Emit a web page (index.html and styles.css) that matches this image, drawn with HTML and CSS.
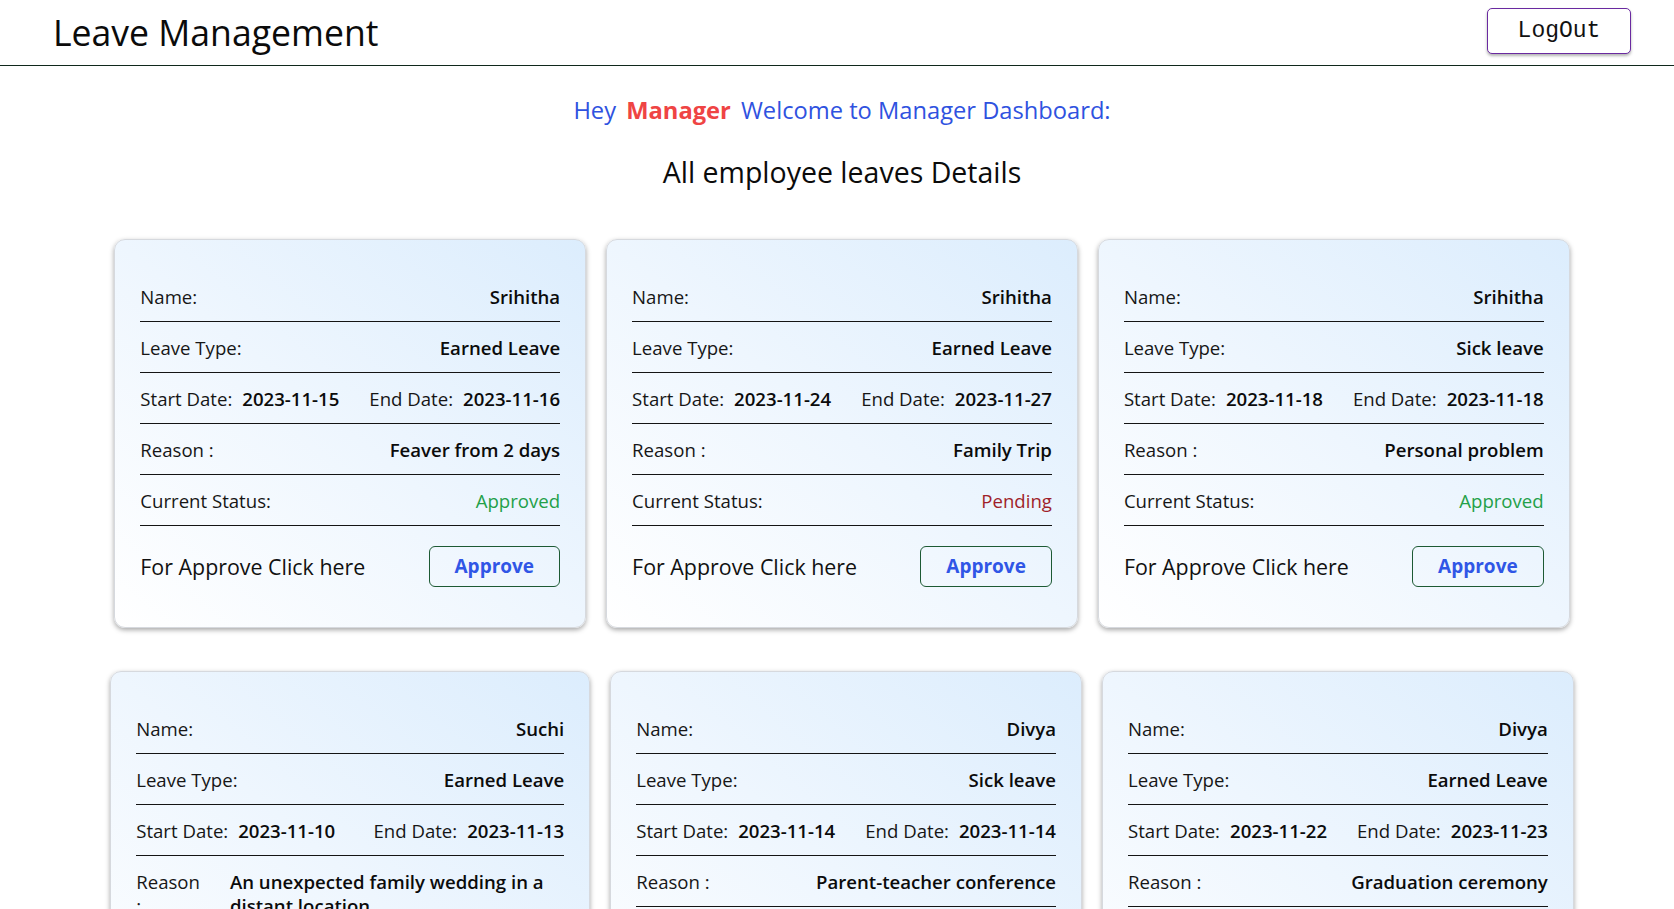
FILE: index.html
```html
<!DOCTYPE html>
<html lang="en">
<head>
<meta charset="utf-8">
<title>Leave Management</title>
<link rel="stylesheet" href="styles.css">
</head>
<body>
<header class="topbar">
  <h1 class="brand">Leave Management</h1>
  <button class="logout" type="button">LogOut</button>
</header>
<main class="dashboard">
  <h4 class="greeting">Hey <span class="who">Manager</span> Welcome to Manager Dashboard:</h4>
  <h3 class="section-title">All employee leaves Details</h3>
  <div class="cards">
    <div class="card">
      <div class="row"><span class="label">Name:</span><span class="value">Srihitha</span></div>
      <div class="row"><span class="label">Leave Type:</span><span class="value">Earned Leave</span></div>
      <div class="row dates">
        <span class="group"><span class="label">Start Date:</span><span class="value">2023-11-15</span></span>
        <span class="group"><span class="label">End Date:</span><span class="value">2023-11-16</span></span>
      </div>
      <div class="row reason"><span class="label">Reason :</span><span class="value">Feaver from 2 days</span></div>
      <div class="row"><span class="label">Current Status:</span><span class="status approved">Approved</span></div>
      <div class="approve-row"><span class="approve-text">For Approve Click here</span><button class="approve" type="button">Approve</button></div>
    </div>
    <div class="card">
      <div class="row"><span class="label">Name:</span><span class="value">Srihitha</span></div>
      <div class="row"><span class="label">Leave Type:</span><span class="value">Earned Leave</span></div>
      <div class="row dates">
        <span class="group"><span class="label">Start Date:</span><span class="value">2023-11-24</span></span>
        <span class="group"><span class="label">End Date:</span><span class="value">2023-11-27</span></span>
      </div>
      <div class="row reason"><span class="label">Reason :</span><span class="value">Family Trip</span></div>
      <div class="row"><span class="label">Current Status:</span><span class="status pending">Pending</span></div>
      <div class="approve-row"><span class="approve-text">For Approve Click here</span><button class="approve" type="button">Approve</button></div>
    </div>
    <div class="card">
      <div class="row"><span class="label">Name:</span><span class="value">Srihitha</span></div>
      <div class="row"><span class="label">Leave Type:</span><span class="value">Sick leave</span></div>
      <div class="row dates">
        <span class="group"><span class="label">Start Date:</span><span class="value">2023-11-18</span></span>
        <span class="group"><span class="label">End Date:</span><span class="value">2023-11-18</span></span>
      </div>
      <div class="row reason"><span class="label">Reason :</span><span class="value">Personal problem</span></div>
      <div class="row"><span class="label">Current Status:</span><span class="status approved">Approved</span></div>
      <div class="approve-row"><span class="approve-text">For Approve Click here</span><button class="approve" type="button">Approve</button></div>
    </div>
    <div class="card">
      <div class="row"><span class="label">Name:</span><span class="value">Suchi</span></div>
      <div class="row"><span class="label">Leave Type:</span><span class="value">Earned Leave</span></div>
      <div class="row dates">
        <span class="group"><span class="label">Start Date:</span><span class="value">2023-11-10</span></span>
        <span class="group"><span class="label">End Date:</span><span class="value">2023-11-13</span></span>
      </div>
      <div class="row reason"><span class="label">Reason :</span><span class="value">An unexpected family wedding in a distant location</span></div>
      <div class="row"><span class="label">Current Status:</span><span class="status pending">Pending</span></div>
      <div class="approve-row"><span class="approve-text">For Approve Click here</span><button class="approve" type="button">Approve</button></div>
    </div>
    <div class="card">
      <div class="row"><span class="label">Name:</span><span class="value">Divya</span></div>
      <div class="row"><span class="label">Leave Type:</span><span class="value">Sick leave</span></div>
      <div class="row dates">
        <span class="group"><span class="label">Start Date:</span><span class="value">2023-11-14</span></span>
        <span class="group"><span class="label">End Date:</span><span class="value">2023-11-14</span></span>
      </div>
      <div class="row reason"><span class="label">Reason :</span><span class="value">Parent-teacher conference</span></div>
      <div class="row"><span class="label">Current Status:</span><span class="status pending">Pending</span></div>
      <div class="approve-row"><span class="approve-text">For Approve Click here</span><button class="approve" type="button">Approve</button></div>
    </div>
    <div class="card">
      <div class="row"><span class="label">Name:</span><span class="value">Divya</span></div>
      <div class="row"><span class="label">Leave Type:</span><span class="value">Earned Leave</span></div>
      <div class="row dates">
        <span class="group"><span class="label">Start Date:</span><span class="value">2023-11-22</span></span>
        <span class="group"><span class="label">End Date:</span><span class="value">2023-11-23</span></span>
      </div>
      <div class="row reason"><span class="label">Reason :</span><span class="value">Graduation ceremony</span></div>
      <div class="row"><span class="label">Current Status:</span><span class="status pending">Pending</span></div>
      <div class="approve-row"><span class="approve-text">For Approve Click here</span><button class="approve" type="button">Approve</button></div>
    </div>
  </div>
</main>
</body>
</html>
```

FILE: styles.css
```css
* { box-sizing: border-box; }

body {
  margin: 0;
  background: #ffffff;
  color: #111111;
  font-family: "Open Sans", "Noto Sans", sans-serif;
}

.topbar {
  display: flex;
  justify-content: space-between;
  align-items: center;
  height: 66px;
  padding: 0 43px 0 53px;
  border-bottom: 1px solid #10281c;
}

.brand {
  margin: 0;
  font-size: 35.6px;
  font-weight: 400;
  line-height: 1.2;
  color: #0b0b0b;
}

.logout {
  width: 144px;
  height: 46px;
  margin-top: -3px;
  background: #ffffff;
  border: 1px solid #6a2aa0;
  border-radius: 5px;
  box-shadow: 0 2px 3px rgba(0, 0, 0, 0.3);
  font-family: "Liberation Mono", "DejaVu Sans Mono", monospace;
  font-size: 23px;
  color: #111111;
  cursor: pointer;
}

.dashboard {
  padding: 0 0 40px 10px;
}

.greeting {
  margin: 27px 0 0;
  text-align: center;
  font-size: 23.7px;
  font-weight: 400;
  line-height: 1.5;
  color: #2f52e0;
}

.who {
  padding: 0 4px;
  font-weight: 700;
  color: #ef4444;
}

.section-title {
  margin: 26px 0 0;
  text-align: center;
  font-size: 28.5px;
  font-weight: 400;
  line-height: 1.2;
  color: #0b0b0b;
}

.cards {
  display: flex;
  flex-wrap: wrap;
  justify-content: center;
  column-gap: 20px;
  row-gap: 43px;
  margin-top: 50px;
}

.card {
  flex: 0 0 auto;
  max-width: 480px;
  padding: 31px 25px 40px;
  border: 1px solid #d6d9de;
  border-radius: 11px;
  background: linear-gradient(to top right, #ffffff 0%, #eef6fe 50%, #dcedfd 100%);
  box-shadow: 0 2px 5px rgba(0, 0, 0, 0.35);
}

.row {
  display: flex;
  justify-content: space-between;
  align-items: flex-start;
  padding: 14px 0 12px;
  border-bottom: 1px solid #141414;
  font-size: 18.6px;
  line-height: 24px;
}

.label {
  color: #161616;
}

.value {
  font-weight: 600;
  color: #0b0b0b;
}

.dates {
  gap: 30px;
}

.group {
  display: flex;
  gap: 10px;
}

.reason {
  gap: 30px;
}

.status {
  font-weight: 400;
}

.status.approved {
  color: #23a049;
}

.status.pending {
  color: #a01f2a;
}

.approve-row {
  display: flex;
  justify-content: space-between;
  align-items: center;
  margin-top: 20px;
}

.approve-text {
  font-size: 21.4px;
  color: #111111;
}

.approve {
  height: 41px;
  padding: 0 25px;
  background: transparent;
  border: 1px solid #1d5a34;
  border-radius: 6px;
  font-family: "Open Sans", "Noto Sans", sans-serif;
  font-size: 19px;
  font-weight: 700;
  color: #3056e6;
  cursor: pointer;
}
```
